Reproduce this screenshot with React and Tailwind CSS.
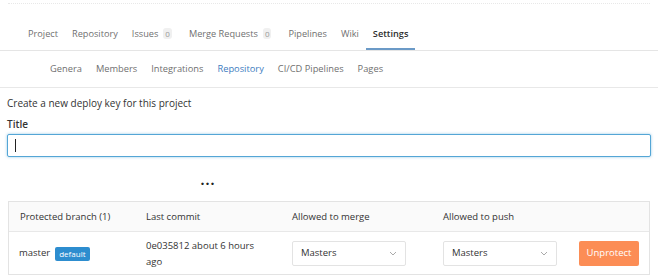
import React from "react";

const font = { fontFamily: '"Open Sans", "Noto Sans", sans-serif' };

function Badge({ n }) {
  return (
    <span className="ml-[5px] mt-[1px] inline-flex h-[11px] min-w-[8px] items-center justify-center rounded-[3px] bg-[#f0f0f0] px-[2px] text-[8px] leading-none text-[#999]">
      {n}
    </span>
  );
}

function Chevron() {
  return (
    <svg width="8" height="5" viewBox="0 0 8 5" className="text-[#aaa]">
      <path d="M1 1 L4 4 L7 1" fill="none" stroke="currentColor" strokeWidth="1" />
    </svg>
  );
}

function Select() {
  return (
    <div className="flex h-[25px] w-[114px] items-center justify-between rounded-[2px] border border-[#e3e3e3] bg-white pl-[8px] pr-[8px] text-[9.5px] text-[#333]">
      <span>Masters</span>
      <Chevron />
    </div>
  );
}

export default function App() {
  const top = [
    ["Project"],
    ["Repository"],
    ["Issues", "0"],
    ["Merge Requests", "0"],
    ["Pipelines"],
    ["Wiki"],
  ];
  const sub = ["Genera", "Members", "Integrations", "Repository", "CI/CD Pipelines", "Pages"];
  return (
    <div className="h-[277px] w-[658px] overflow-hidden bg-white text-[#333]" style={font}>
      <div className="mx-[8px] mt-[3px] border-t border-dotted border-[#e8e8e8]" />
      <div className="flex h-[47px] items-end border-b border-[#e5e5e5] pl-[21px] text-[9.2px] text-[#707070]">
        {top.map(([t, b]) => (
          <div key={t} className={"flex h-[23px] items-start px-[7px] " + (b ? "pr-[10px]" : "")}>
            <span>{t}</span>
            {b && <Badge n={b} />}
          </div>
        ))}
        <div className="flex h-[23px] items-start border-b-[2px] border-[#6b9ac7] px-[7px] font-semibold text-[#2e2e2e]">
          Settings
        </div>
      </div>
      <div className="flex h-[37px] items-center border-b border-[#e8e8e8] pl-[43px] text-[9.3px] text-[#707070]">
        {sub.map((t) => (
          <div key={t} className={"px-[7px] " + (t === "Repository" ? "text-[#3d7cc0]" : "")}>
            {t}
          </div>
        ))}
      </div>
      <div className="px-[7px]">
        <div className="mt-[8px] text-[10px] text-[#333]">Create a new deploy key for this project</div>
        <div className="mt-[6px] text-[10px] font-semibold text-[#333]">Title</div>
        <div className="mt-[2px] flex h-[23px] items-center rounded-[2px] border border-[#54a6d6] bg-white pl-[7px] shadow-[0_0_3px_rgba(84,166,214,0.6)]">
          <div className="h-[13px] w-px bg-[#222]" />
        </div>
        <div className="mt-[20px] flex justify-center pr-[242px] text-[14px] font-bold leading-none tracking-[1px] text-[#222]">
          ···
        </div>
      </div>
      <div className="mx-[8px] mt-[10px] w-[642px] border border-[#e3e3e3] text-[9.5px]">
        <div className="flex h-[30px] items-center border-b border-[#e8e8e8] bg-[#fafafa] pt-[1px] text-[#333]">
          <div className="w-[137px] pl-[11px]">Protected branch (1)</div>
          <div className="w-[146px]">Last commit</div>
          <div className="w-[151px]">Allowed to merge</div>
          <div>Allowed to push</div>
        </div>
        <div className="flex h-[42px] items-center pt-[1px] text-[#333]">
          <div className="flex w-[137px] items-center pl-[10px]">
            <span>master</span>
            <span className="ml-[5px] rounded-[2px] bg-[#2d8dcf] px-[4px] py-[1px] text-[8px] leading-[12px] text-white">
              default
            </span>
          </div>
          <div className="w-[146px] pr-[20px] leading-[16px]">0e035812 about 6 hours ago</div>
          <div className="w-[151px]">
            <Select />
          </div>
          <div className="w-[136px]">
            <Select />
          </div>
          <div className="flex h-[25px] w-[60px] items-center justify-center rounded-[2px] bg-[#fc8d55] text-[9.5px] text-white">
            Unprotect
          </div>
        </div>
      </div>
    </div>
  );
}
